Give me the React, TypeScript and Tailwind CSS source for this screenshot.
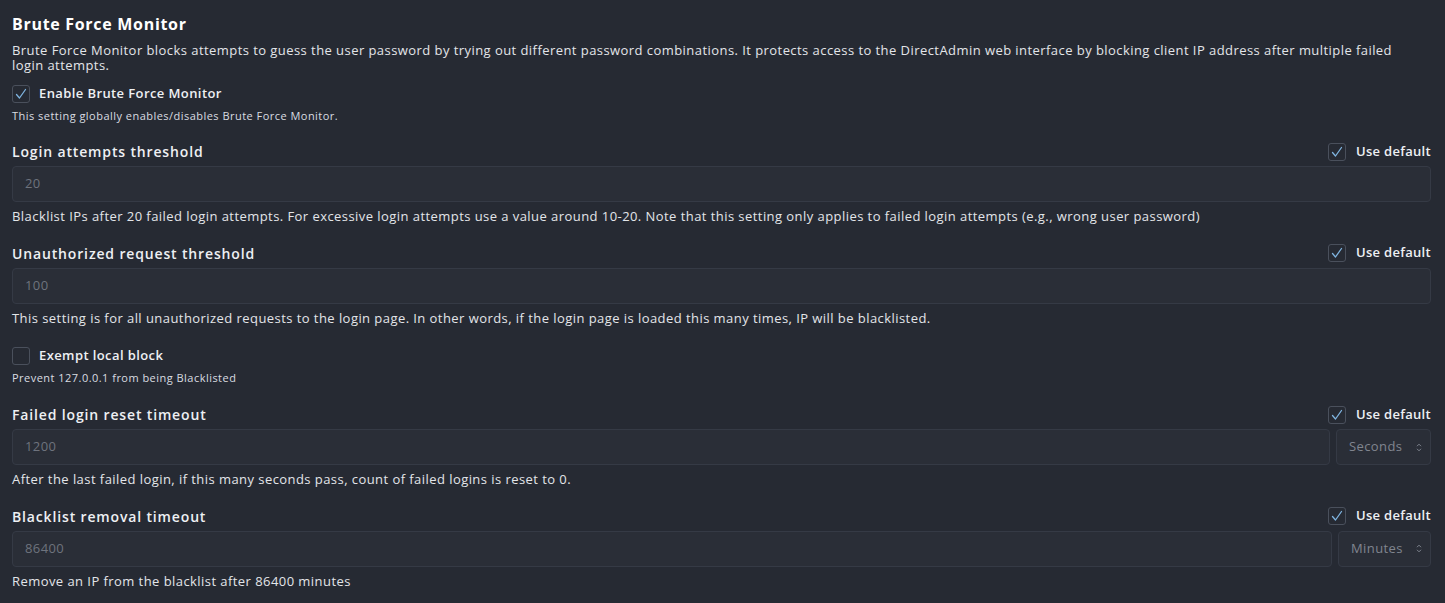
import React from "react";

const Check = ({ checked }: { checked: boolean }) => (
  <span className="flex h-[18px] w-[18px] shrink-0 items-center justify-center rounded-[3px] border border-[#4a505c] bg-[#262a33]">
    {checked && (
      <svg width="14" height="14" viewBox="0 0 14 14" fill="none">
        <path d="M2.5 7.5 L5.5 11 L11.5 2.5" stroke="#7fb4e0" strokeWidth="1.3" strokeLinecap="round" strokeLinejoin="round" />
      </svg>
    )}
  </span>
);

const UseDefault = () => (
  <div className="flex items-center gap-[10px]">
    <Check checked />
    <span className="text-[13px] font-semibold tracking-[0.3px] text-[#eef0f3]">Use default</span>
  </div>
);

const Select = ({ value, w }: { value: string; w: string }) => (
  <div className={`flex h-[36px] ${w} shrink-0 items-center justify-between rounded-[4px] border border-[#353a45] bg-[#2a2e37] pl-3 pr-2`}>
    <span className="text-[13px] tracking-[0.4px] text-[#80858f]">{value}</span>
    <svg width="6" height="9" viewBox="0 0 6 9" fill="none">
      <path d="M1 3.2 L3 1.2 L5 3.2 M1 5.8 L3 7.8 L5 5.8" stroke="#80858f" strokeWidth="1" />
    </svg>
  </div>
);

const Field = ({
  label,
  value,
  help,
  select,
}: {
  label: string;
  value: string;
  help: string;
  select?: React.ReactNode;
}) => (
  <div className="flex flex-col">
    <div className="flex items-center justify-between pr-[14px]">
      <span className="text-[14px] font-semibold tracking-[0.85px] text-[#eef0f3]">{label}</span>
      <UseDefault />
    </div>
    <div className="mt-[4px] flex gap-[6px] pr-[14px]">
      <div className="flex h-[36px] flex-1 items-center rounded-[4px] border border-[#353a45] bg-[#2a2e37] px-3">
        <span className="text-[13px] tracking-[0.4px] text-[#6e737d]">{value}</span>
      </div>
      {select}
    </div>
    <p className="mt-[5px] text-[13px] tracking-[0.44px] text-[#e3e5e9]">{help}</p>
  </div>
);

const CheckRow = ({ checked, label, help }: { checked: boolean; label: string; help: string }) => (
  <div className="flex flex-col">
    <div className="flex items-center gap-[9px]">
      <Check checked={checked} />
      <span className="text-[13px] font-semibold tracking-[0.4px] text-[#eef0f3]">{label}</span>
    </div>
    <p className="mt-[4px] text-[11px] tracking-[0.47px] text-[#d9dce1]">{help}</p>
  </div>
);

export default function App() {
  return (
    <div
      className="min-h-[603px] w-full bg-[#262a33] pl-[12px] pt-[12px]"
      style={{ fontFamily: '"Open Sans", "Liberation Sans", sans-serif' }}
    >
      <h1 className="text-[16px] font-bold tracking-[0.7px] text-white">Brute Force Monitor</h1>
      <p className="mt-[7px] pr-[30px] text-[13px] leading-[15px] tracking-[0.44px] text-[#e3e5e9]">
        Brute Force Monitor blocks attempts to guess the user password by trying out different password combinations. It protects access to the DirectAdmin web interface by blocking client IP address after multiple failed login attempts.
      </p>
      <div className="mt-[11px]">
        <CheckRow
          checked
          label="Enable Brute Force Monitor"
          help="This setting globally enables/disables Brute Force Monitor."
        />
      </div>
      <div className="mt-[17px] flex flex-col gap-[16px]">
        <Field
          label="Login attempts threshold"
          value="20"
          help="Blacklist IPs after 20 failed login attempts. For excessive login attempts use a value around 10-20. Note that this setting only applies to failed login attempts (e.g., wrong user password)"
        />
        <Field
          label="Unauthorized request threshold"
          value="100"
          help="This setting is for all unauthorized requests to the login page. In other words, if the login page is loaded this many times, IP will be blacklisted."
        />
        <div className="pt-[2px]">
          <CheckRow checked={false} label="Exempt local block" help="Prevent 127.0.0.1 from being Blacklisted" />
        </div>
        <div className="pt-[2px]">
          <Field
            label="Failed login reset timeout"
            value="1200"
            help="After the last failed login, if this many seconds pass, count of failed logins is reset to 0."
            select={<Select value="Seconds" w="w-[95px]" />}
          />
        </div>
        <Field
          label="Blacklist removal timeout"
          value="86400"
          help="Remove an IP from the blacklist after 86400 minutes"
          select={<Select value="Minutes" w="w-[93px]" />}
        />
      </div>
    </div>
  );
}
